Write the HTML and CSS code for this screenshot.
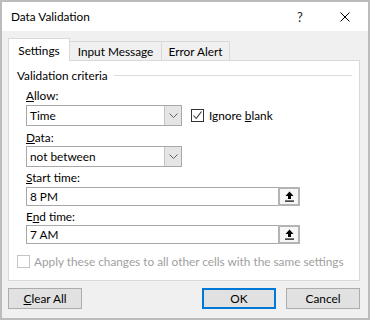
FILE: index.html
```html
<!DOCTYPE html>
<html lang="en">
<head>
    <meta charset="UTF-8">
    <title>Data Validation</title>
    <link rel="stylesheet" href="styles.css">
</head>
<body>
    <div class="dialog">
        <div class="titlebar">
            <span class="title">Data Validation</span>
            <span class="help">?</span>
            <span class="close">
                <svg width="10" height="10" viewBox="0 0 10 10"><path d="M0.5 0.5 L9.5 9.5 M9.5 0.5 L0.5 9.5" stroke="#000" stroke-width="1" fill="none"/></svg>
            </span>
        </div>
        <div class="content">
            <div class="tabs">
                <div class="tab active">Settings</div>
                <div class="tab tab-input">Input Message</div>
                <div class="tab tab-error">Error Alert</div>
            </div>
            <div class="panel">
                <div class="group-title">
                    <span>Validation criteria</span>
                    <span class="rule"></span>
                </div>
                <div class="fields">
                    <div class="field-label label-allow"><u>A</u>llow:</div>
                    <div class="row">
                        <div class="select">
                            <span class="value">Time</span>
                            <span class="arrow"><svg width="9" height="5" viewBox="0 0 9 5"><path d="M0.5 0.5 L4.5 4.5 L8.5 0.5" stroke="#606060" fill="none"/></svg></span>
                        </div>
                        <div class="check">
                            <span class="box"><svg width="11" height="11" viewBox="0 0 11 11"><path d="M1.5 5.5 L4.2 8.5 L9.5 1.5" stroke="#333" stroke-width="1.1" fill="none"/></svg></span>
                            <span>Ignore <u>b</u>lank</span>
                        </div>
                    </div>
                    <div class="field-label label-data"><u>D</u>ata:</div>
                    <div class="select">
                        <span class="value">not between</span>
                        <span class="arrow"><svg width="9" height="5" viewBox="0 0 9 5"><path d="M0.5 0.5 L4.5 4.5 L8.5 0.5" stroke="#606060" fill="none"/></svg></span>
                    </div>
                    <div class="field-label label-start"><u>S</u>tart time:</div>
                    <div class="input">
                        <span class="value">8 PM</span>
                        <span class="ref-btn"><svg width="9" height="11" viewBox="0 0 9 11"><path d="M4.5 0.5 L8.5 5 H6 V8 H3 V5 H0.5 Z" fill="#000"/><rect x="0" y="9.5" width="9" height="1.2" fill="#000"/></svg></span>
                    </div>
                    <div class="field-label label-end">E<u>n</u>d time:</div>
                    <div class="input">
                        <span class="value">7 AM</span>
                        <span class="ref-btn"><svg width="9" height="11" viewBox="0 0 9 11"><path d="M4.5 0.5 L8.5 5 H6 V8 H3 V5 H0.5 Z" fill="#000"/><rect x="0" y="9.5" width="9" height="1.2" fill="#000"/></svg></span>
                    </div>
                </div>
                <div class="apply">
                    <span class="box disabled"></span>
                    <span>Apply these changes to all other cells with the same settings</span>
                </div>
            </div>
            <div class="buttons">
                <button class="btn"><u>C</u>lear All</button>
                <span class="spacer"></span>
                <button class="btn btn-default">OK</button>
                <button class="btn">Cancel</button>
            </div>
        </div>
    </div>
</body>
</html>
```

FILE: styles.css
```css
body {
    margin: 0;
    padding: 0;
    background-color: #ffffff;
}
.dialog {
    width: 370px;
    height: 320px;
    box-sizing: border-box;
    border: 2px solid #bcbcbc;
    background-color: #f0f0f0;
    font-family: Lato, "Noto Sans", sans-serif;
    font-size: 11.8px;
    color: #000;
}
.titlebar {
    height: 29px;
    background-color: #fff;
    display: flex;
    align-items: center;
}
.title {
    flex: 1;
    padding-left: 9px;
}
.help {
    width: 36px;
    margin-right: 4px;
    text-align: center;
    font-size: 13px;
    color: #222;
}
.close {
    width: 46px;
    display: flex;
    justify-content: center;
}
.content {
    padding: 7px 8px 0 6px;
}
.tabs {
    display: flex;
    align-items: flex-end;
    height: 22px;
}
.tab {
    box-sizing: border-box;
    height: 19px;
    border: 1px solid #d9d9d9;
    border-bottom: none;
    display: flex;
    align-items: center;
    justify-content: center;
    margin-left: -1px;
    padding-top: 1px;
}
.tab.active {
    height: 23px;
    margin-bottom: -1px;
    margin-left: 0;
    background-color: #fff;
    position: relative;
    z-index: 1;
    width: 62px;
    padding-top: 0;
}
.tab-input {
    width: 93px;
}
.tab-error {
    width: 69px;
}
.panel {
    box-sizing: border-box;
    height: 221px;
    background-color: #fff;
    border: 1px solid #d9d9d9;
    padding: 6px 7px 0 8px;
}
.group-title {
    display: flex;
    align-items: center;
    gap: 6px;
    height: 16px;
}
.rule {
    flex: 1;
    height: 1px;
    background-color: #dcdcdc;
}
.fields {
    margin-left: 9px;
}
.field-label {
    line-height: 16px;
    height: 16px;
}
.label-allow {
    margin-top: 5px;
    margin-bottom: 1px;
}
.label-data {
    margin-top: 4px;
}
.label-start {
    margin-top: 3px;
    margin-bottom: 1px;
}
.label-end {
    margin-top: 3px;
}
.row {
    display: flex;
    align-items: center;
    gap: 9px;
}
.select {
    box-sizing: border-box;
    width: 156px;
    height: 21px;
    border: 1px solid #a8a8a8;
    display: flex;
    align-items: stretch;
}
.value {
    flex: 1;
    padding-left: 3px;
    display: flex;
    align-items: center;
}
.arrow {
    width: 16px;
    background-color: #e5e5e5;
    border-left: 1px solid #c4c4c4;
    display: flex;
    align-items: center;
    justify-content: center;
}
.check {
    display: flex;
    align-items: center;
    gap: 5px;
}
.box {
    box-sizing: border-box;
    flex-shrink: 0;
    width: 13px;
    height: 13px;
    border: 1px solid #333;
    background-color: #fff;
    display: flex;
}
.input {
    box-sizing: border-box;
    width: 274px;
    height: 19px;
    border: 1px solid #a8a8a8;
    display: flex;
    align-items: stretch;
}
.ref-btn {
    box-sizing: border-box;
    width: 22px;
    margin: -1px -1px -1px 0;
    border: 2px solid #b4b4b4;
    background-color: #f7f7f7;
    display: flex;
    align-items: center;
    justify-content: center;
}
.apply {
    margin-top: 9px;
    display: flex;
    align-items: center;
    gap: 4px;
    height: 16px;
    color: #a0a0a0;
    white-space: nowrap;
}
.box.disabled {
    border-color: #c4c4c4;
}
.buttons {
    display: flex;
    gap: 10px;
    margin-top: 7px;
}
.spacer {
    flex: 1;
}
.btn {
    box-sizing: border-box;
    width: 74px;
    height: 21px;
    background-color: #e1e1e1;
    border: 1px solid #adadad;
    font-family: inherit;
    font-size: 11.8px;
    color: #000;
    padding: 0;
}
.btn-default {
    border: 2px solid #0078d7;
}
```
